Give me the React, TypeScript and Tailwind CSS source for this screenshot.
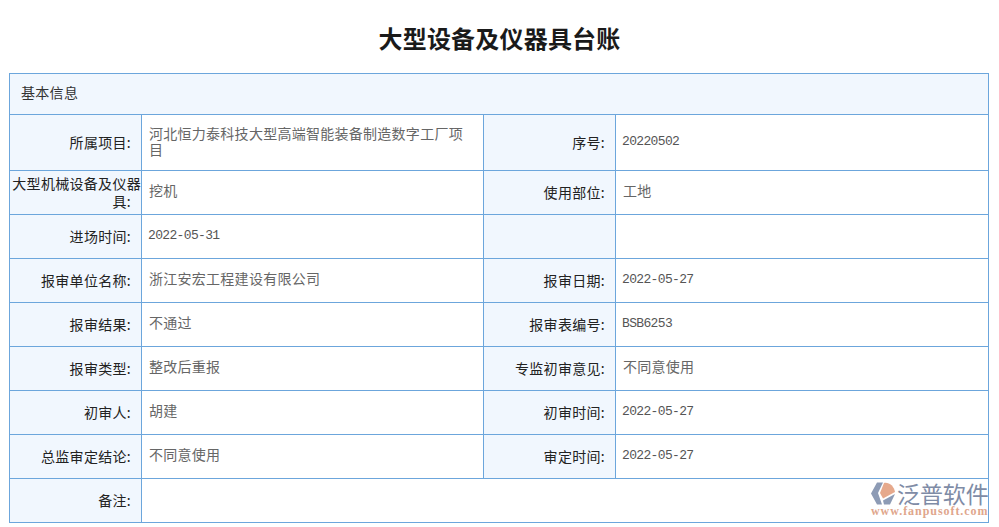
import { FC, ReactNode } from 'react';

const Label: FC<{ children?: ReactNode }> = ({ children }) => (
  <td className="border border-[#6ca6dc] bg-[#f1f7fe] pb-[2px] text-right text-[14px] leading-[18px] tracking-[0.3px] text-[#222]">
    {children}
    {children ? <span className="inline-block w-[10px]" /> : null}
  </td>
);

const Value: FC<{ text: string }> = ({ text }) => {
  const latin = /^[\x00-\x7f]*$/.test(text);
  return (
    <td
      className={
        latin
          ? "border border-[#6ca6dc] px-[6px] pb-[1px] font-['Liberation_Mono',monospace] text-[13px] leading-[16px] tracking-[-0.65px] text-[#555]"
          : 'border border-[#6ca6dc] px-[7px] pb-[5px] text-[14px] leading-[16px] tracking-[0.27px] text-[#666]'
      }
    >
      {text.length > 20 ? <span className="block pt-[2px]">{text}</span> : text}
    </td>
  );
};

const rows: [string, string, string, string, number][] = [
  ['所属项目:', '河北恒力泰科技大型高端智能装备制造数字工厂项目', '序号:', '20220502', 56],
  ['大型机械设备及仪器具:', '挖机', '使用部位:', '工地', 44],
  ['进场时间:', '2022-05-31', '', '', 44],
  ['报审单位名称:', '浙江安宏工程建设有限公司', '报审日期:', '2022-05-27', 44],
  ['报审结果:', '不通过', '报审表编号:', 'BSB6253', 44],
  ['报审类型:', '整改后重报', '专监初审意见:', '不同意使用', 44],
  ['初审人:', '胡建', '初审时间:', '2022-05-27', 44],
  ['总监审定结论:', '不同意使用', '审定时间:', '2022-05-27', 44],
];

const Watermark = () => (
  <div className="absolute top-[482px] left-[870px] w-[120px]">
    <div className="flex h-[23px] items-center">
      <svg width="26" height="23" viewBox="0 0 26 23" className="mr-[1px] shrink-0">
        <path d="M7 0.5 L13 0.5 L8 11 L12 22.5 L7 22.5 L1 11.5 Z" fill="#8d9bb5" />
        <path d="M14 1 C19 0 24 4 25 10 L13 16.5 L10 11 Z" fill="#e6a98c" />
        <path d="M25 12 L20 22.5 L14 22.5 L13 18.5 Z" fill="#8d9bb5" />
      </svg>
      <span className="text-[23px] leading-[23px] tracking-[-0.1px] whitespace-nowrap text-[#7f8ca6]">泛普软件</span>
    </div>
    <div className="pl-[1px] font-['Liberation_Serif',serif] text-[12px] leading-[12px] font-bold tracking-[0.95px] whitespace-nowrap text-[#e0a68c]">
      www.fanpusoft.com
    </div>
  </div>
);

export default function App() {
  return (
    <div className="relative h-[527px] w-[999px] overflow-hidden bg-white font-['Noto_Sans_CJK_SC','Noto_Sans',sans-serif]">
      <h1 className="h-[73px] pt-[21px] text-center text-[24px] leading-[34px] font-bold tracking-[0.2px] text-[#1a1a1a]">
        大型设备及仪器具台账
      </h1>
      <table className="ml-[9px] w-[980px] table-fixed border-collapse">
        <colgroup>
          <col className="w-[132px]" />
          <col className="w-[342px]" />
          <col className="w-[132px]" />
          <col />
        </colgroup>
        <tbody>
          <tr className="h-[41px]">
            <td colSpan={4} className="border border-[#6ca6dc] bg-[#f1f7fe] pb-[4px] pl-[11px] text-[14px] tracking-[0.3px] text-[#333]">
              基本信息
            </td>
          </tr>
          {rows.map(([l1, v1, l2, v2, h]) => (
            <tr key={l1} style={{ height: h }}>
              <Label>{l1}</Label>
              <Value text={v1} />
              <Label>{l2}</Label>
              <Value text={v2} />
            </tr>
          ))}
          <tr className="h-[44px]">
            <Label>备注:</Label>
            <td colSpan={3} className="border border-[#6ca6dc]" />
          </tr>
        </tbody>
      </table>
      <Watermark />
    </div>
  );
}
